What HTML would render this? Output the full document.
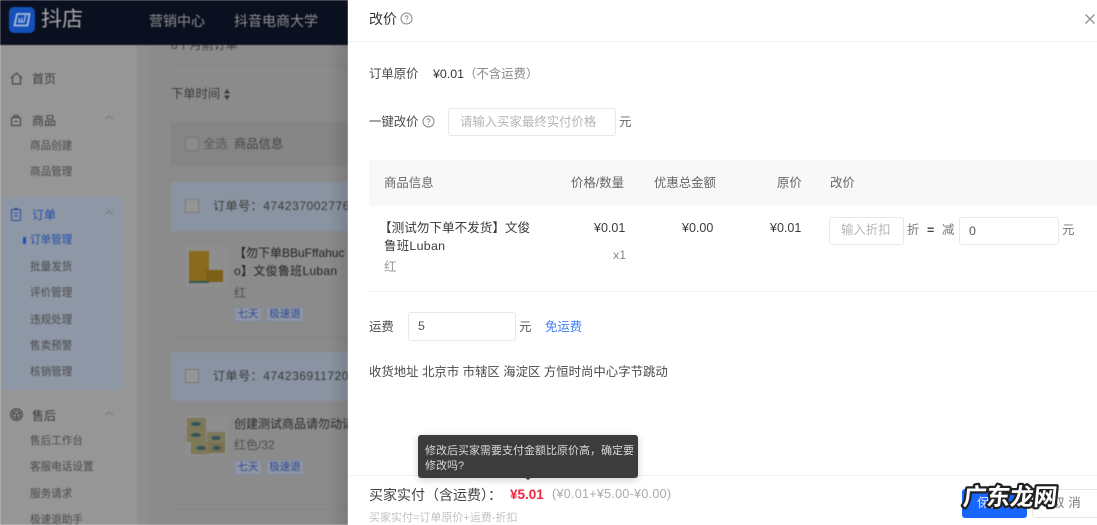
<!DOCTYPE html>
<html lang="zh">
<head>
<meta charset="utf-8">
<style>
html,body{margin:0;padding:0;width:1097px;height:525px;overflow:hidden;background:#fff}
body{font-family:"Liberation Sans","Noto Sans CJK SC",sans-serif;position:relative}
.t{position:absolute;white-space:nowrap;line-height:1}
.b{position:absolute;box-sizing:border-box}
#left{position:absolute;left:0;top:0;width:348px;height:525px;overflow:hidden;background:#8b8b8b;filter:blur(.5px)}
#right{position:absolute;left:348px;top:0;width:749px;height:525px;background:#fff;overflow:hidden;filter:blur(.35px)}
#right .t{color:#4a4a4a;font-size:12.4px}
.nav{font-size:10.6px;color:#4a4a4a}
.gh{font-size:12px;color:#3a3a3a}
.tag{position:absolute;height:15px;box-sizing:border-box;border:1px solid #7f8a9e;background:#8f95a2;color:#2d4a94;font-size:10.500px;line-height:13px;text-align:center}
.inp{position:absolute;box-sizing:border-box;border:1px solid #e8e8e8;border-radius:3px;background:#fff}
</style>
</head>
<body>
<div id="left">
  <div class="b" style="left:0;top:45px;width:137px;height:480px;background:#969696"></div>
  <div class="b" style="left:137px;top:45px;width:12px;height:480px;background:#8f8f8f"></div>
  <div class="b" style="left:2px;top:197px;width:121px;height:193px;background:#8e97a6;border-radius:3px"></div>

  <div class="t" style="left:171px;top:39px;font-size:12px;color:#3f3f3f">6个月前订单</div>
  <div class="b" style="left:0;top:0;width:348px;height:45px;background:#0a101f"></div>

  <div class="b" style="left:9px;top:7px;width:26px;height:26px;background:#1450b8;border-radius:5px"></div>
  <svg style="position:absolute;left:9px;top:7px" width="26" height="26" viewBox="0 0 26 26" fill="none" stroke="#a9bbdc"><path d="M8 7h12.500l-2 11.500H5.500z" stroke-width="1.800"/><path d="M10.500 11l-.7 4h5.500" stroke-width="1.300"/><path d="M13 11l-.6 4M16.500 8l-1.300 7" stroke-width="1.300"/></svg>
  <div class="t" style="left:41px;top:9px;font-size:21px;color:#a8a8a8">抖店</div>
  <div class="t" style="left:149px;top:14px;font-size:14px;color:#8f8f8f">营销中心</div>
  <div class="t" style="left:234px;top:14px;font-size:14px;color:#8f8f8f">抖音电商大学</div>

  <svg style="position:absolute;left:9px;top:71px" width="15" height="15" viewBox="0 0 15 15" fill="none" stroke="#3a3a3a"><path d="M2 7l5.500-5L13 7M3.500 6v7h8V6"/></svg>
  <div class="t gh" style="left:32px;top:73px">首页</div>
  <svg style="position:absolute;left:9px;top:113px" width="15" height="15" viewBox="0 0 15 15" fill="none" stroke="#3a3a3a"><rect x="2.500" y="4.500" width="9" height="8" rx="1"/><path d="M5 4.500V2.500h4v2M5.500 8.500h3"/></svg>
  <div class="t gh" style="left:32px;top:115px">商品</div>
  <svg style="position:absolute;left:104px;top:114px" width="10" height="7" fill="none" stroke="#777"><path d="M1 5l4-3 4 3"/></svg>
  <div class="t nav" style="left:30px;top:141px">商品创建</div>
  <div class="t nav" style="left:30px;top:167px">商品管理</div>

  <svg style="position:absolute;left:9px;top:207px" width="15" height="15" viewBox="0 0 15 15" fill="none" stroke="#2a4f9e"><rect x="2.500" y="2.500" width="9" height="11" rx="1"/><path d="M5 1.500h4M5 6h4M5 9h4"/></svg>
  <div class="t gh" style="left:32px;top:209px;color:#1f4fa8">订单</div>
  <svg style="position:absolute;left:104px;top:209px" width="10" height="7" fill="none" stroke="#777"><path d="M1 5l4-3 4 3"/></svg>
  <div class="b" style="left:23px;top:237px;width:3px;height:7px;background:#1a4fb8;border-radius:1px"></div>
  <div class="t nav" style="left:30px;top:235px;color:#1f4fa8">订单管理</div>
  <div class="t nav" style="left:30px;top:262px">批量发货</div>
  <div class="t nav" style="left:30px;top:288px">评价管理</div>
  <div class="t nav" style="left:30px;top:315px">违规处理</div>
  <div class="t nav" style="left:30px;top:341px">售卖预警</div>
  <div class="t nav" style="left:30px;top:367px">核销管理</div>

  <svg style="position:absolute;left:9px;top:407px" width="15" height="15" viewBox="0 0 15 15" fill="none" stroke="#3a3a3a"><circle cx="7.500" cy="7.500" r="5.800"/><path d="M7.500 3.500l3.500 2v4l-3.500 2-3.500-2v-4zM4 5.500l3.500 2 3.500-2M7.500 7.500v4"/></svg>
  <div class="t gh" style="left:32px;top:410px">售后</div>
  <svg style="position:absolute;left:104px;top:410px" width="10" height="7" fill="none" stroke="#777"><path d="M1 5l4-3 4 3"/></svg>
  <div class="t nav" style="left:30px;top:436px">售后工作台</div>
  <div class="t nav" style="left:30px;top:462px">客服电话设置</div>
  <div class="t nav" style="left:30px;top:489px">服务请求</div>
  <div class="t nav" style="left:30px;top:515px">极速退助手</div>

  <div class="b" style="left:171px;top:64px;width:177px;height:1px;background:#858585"></div>
  <div class="t" style="left:171px;top:88px;font-size:12.300px;color:#3a3a3a">下单时间</div>
  <svg style="position:absolute;left:223px;top:89px" width="8" height="11"><path d="M4 0l3 4.500H1zM4 11l3-4.500H1z" fill="#3a3a3a"/></svg>

  <div class="b" style="left:171px;top:122px;width:177px;height:44px;background:#858585"></div>
  <div class="b" style="left:185px;top:137px;width:14px;height:14px;border:1px solid #777;background:#8d8d8d"></div>
  <div class="t" style="left:203px;top:138px;font-size:12.300px;color:#5a5a5a">全选</div>
  <div class="t" style="left:234px;top:138px;font-size:12.300px;color:#444">商品信息</div>

  <div class="b" style="left:171px;top:182px;width:177px;height:49px;background:#8a93a1"></div>
  <div class="b" style="left:185px;top:199px;width:14px;height:14px;border:1px solid #7a7a7a;background:#969696"></div>
  <div class="t" style="left:213px;top:200px;font-size:12px;letter-spacing:.55px;color:#3a3a3a">订单号：474237002776</div>

  <svg style="position:absolute;left:186px;top:246px" width="41" height="41" viewBox="0 0 41 41"><rect width="41" height="41" fill="#8e8e8e"/><rect x="3" y="5" width="20" height="32" fill="#8a6a1c"/><rect x="20" y="24" width="17" height="12" fill="#7d5f18"/><rect x="3" y="35" width="20" height="2" fill="#2f5a52"/></svg>
  <div class="t" style="left:234px;top:247px;font-size:12px;color:#222">【勿下单BBuFffahuc</div>
  <div class="t" style="left:234px;top:265px;font-size:12px;letter-spacing:.3px;color:#222">o】文俊鲁班Luban</div>
  <div class="t" style="left:234px;top:287px;font-size:12px;color:#4e4e4e">红</div>
  <div class="tag" style="left:234px;top:307px;width:28px">七天</div>
  <div class="tag" style="left:266px;top:307px;width:38px">极速退</div>
  <div class="b" style="left:171px;top:337px;width:177px;height:1px;background:#858585"></div>

  <div class="b" style="left:171px;top:352px;width:177px;height:49px;background:#8a93a1"></div>
  <div class="b" style="left:185px;top:369px;width:14px;height:14px;border:1px solid #7a7a7a;background:#969696"></div>
  <div class="t" style="left:213px;top:370px;font-size:12px;letter-spacing:.55px;color:#3a3a3a">订单号：474236911720</div>

  <svg style="position:absolute;left:186px;top:415px" width="41" height="41" viewBox="0 0 41 41"><rect width="41" height="41" fill="#8e8e8e"/><rect x="1" y="3" width="19" height="12" fill="#7d7858"/><rect x="1" y="15" width="19" height="12" fill="#7d7858"/><rect x="5" y="27" width="19" height="12" fill="#7d7858"/><rect x="21" y="17" width="18" height="11" fill="#7d7858"/><rect x="24" y="28" width="15" height="10" fill="#76714f"/><ellipse cx="10" cy="9" rx="5" ry="2" fill="#33535a"/><ellipse cx="10" cy="20" rx="5" ry="2" fill="#33535a"/><ellipse cx="15" cy="33" rx="5" ry="2" fill="#33535a"/><ellipse cx="30" cy="23" rx="5" ry="2" fill="#33535a"/><ellipse cx="31" cy="33" rx="4" ry="2" fill="#33535a"/></svg>
  <div class="t" style="left:234px;top:418px;font-size:12px;color:#2a2a2a">创建测试商品请勿动请</div>
  <div class="t" style="left:234px;top:439px;font-size:12px;color:#4e4e4e">红色/32</div>
  <div class="tag" style="left:234px;top:460px;width:28px">七天</div>
  <div class="tag" style="left:266px;top:460px;width:38px">极速退</div>
  <div class="b" style="left:171px;top:509px;width:177px;height:1px;background:#858585"></div>

  <div class="b" style="left:328px;top:45px;width:20px;height:480px;background:linear-gradient(90deg,rgba(0,0,0,0),rgba(0,0,0,.12))"></div>
</div>

<div id="right">
  <div class="t" style="left:21px;top:12px;font-size:14px !important"><span style="font-size:14px;color:#333">改价</span></div>
  <svg style="position:absolute;left:52px;top:12px" width="13" height="13" viewBox="0 0 13 13" fill="none" stroke="#8a8a8a"><circle cx="6.500" cy="6.500" r="5.500"/><path d="M5 5.200a1.500 1.500 0 1 1 2.300 1.300c-.6.400-.8.600-.8 1.200M6.500 9v.8"/></svg>
  <svg style="position:absolute;left:736px;top:13px" width="12" height="12" viewBox="0 0 12 12" stroke="#8f8f8f" stroke-width="1.300"><path d="M1.500 1.500l9 9M10.500 1.500l-9 9"/></svg>
  <div class="b" style="left:0;top:41px;width:749px;height:1px;background:#f2f2f2"></div>

  <div class="t" style="left:21px;top:68px">订单原价</div>
  <div class="t" style="left:85px;top:68px"><span style="color:#333">¥0.01</span></div>
  <div class="t" style="left:116px;top:68px"><span style="color:#8a8a8a">（不含运费）</span></div>

  <div class="t" style="left:21px;top:116px">一键改价</div>
  <svg style="position:absolute;left:74px;top:115px" width="13" height="13" viewBox="0 0 13 13" fill="none" stroke="#8a8a8a"><circle cx="6.500" cy="6.500" r="5.500"/><path d="M5 5.200a1.500 1.500 0 1 1 2.300 1.300c-.6.400-.8.600-.8 1.200M6.500 9v.8"/></svg>
  <div class="inp" style="left:100px;top:108px;width:168px;height:28px"></div>
  <div class="t" style="left:112px;top:116px"><span style="color:#b5b5b5">请输入买家最终实付价格</span></div>
  <div class="t" style="left:271px;top:116px"><span style="color:#666">元</span></div>

  <div class="b" style="left:21px;top:160px;width:728px;height:46px;background:#f8f8f8"></div>
  <div class="t" style="left:36px;top:177px"><span style="color:#666">商品信息</span></div>
  <div class="t" style="left:223px;top:177px"><span style="color:#666">价格/数量</span></div>
  <div class="t" style="left:306px;top:177px"><span style="color:#666">优惠总金额</span></div>
  <div class="t" style="left:429px;top:177px"><span style="color:#666">原价</span></div>
  <div class="t" style="left:482px;top:177px"><span style="color:#666">改价</span></div>

  <div class="t" style="left:31px;top:222px"><span style="color:#3a3a3a;font-size:12.600px">【测试勿下单不发货】文俊</span></div>
  <div class="t" style="left:36px;top:240px"><span style="color:#3a3a3a;letter-spacing:.3px">鲁班Luban</span></div>
  <div class="t" style="left:36px;top:261px"><span style="color:#999">红</span></div>
  <div class="t" style="left:246px;top:222px"><span style="color:#3a3a3a;font-size:12.500px">¥0.01</span></div>
  <div class="t" style="left:265px;top:249px"><span style="color:#888">x1</span></div>
  <div class="t" style="left:334px;top:222px"><span style="color:#3a3a3a;font-size:12.500px">¥0.00</span></div>
  <div class="t" style="left:422px;top:222px"><span style="color:#3a3a3a;font-size:12.500px">¥0.01</span></div>

  <div class="inp" style="left:481px;top:217px;width:75px;height:28px"></div>
  <div class="t" style="left:493px;top:224px"><span style="color:#b5b5b5">输入折扣</span></div>
  <div class="t" style="left:559px;top:224px"><span style="color:#777">折</span></div>
  <div class="t" style="left:579px;top:224px;font-weight:bold"><span style="color:#444">=</span></div>
  <div class="t" style="left:594px;top:224px"><span style="color:#777">减</span></div>
  <div class="inp" style="left:611px;top:217px;width:100px;height:28px"></div>
  <div class="t" style="left:621px;top:225px"><span style="color:#555">0</span></div>
  <div class="t" style="left:714px;top:224px"><span style="color:#777">元</span></div>
  <div class="b" style="left:21px;top:291px;width:728px;height:1px;background:#f2f2f2"></div>

  <div class="t" style="left:21px;top:321px">运费</div>
  <div class="inp" style="left:60px;top:312px;width:108px;height:29px"></div>
  <div class="t" style="left:70px;top:320px"><span style="color:#555">5</span></div>
  <div class="t" style="left:171px;top:321px"><span style="color:#555">元</span></div>
  <div class="t" style="left:197px;top:321px"><span style="color:#3f82f5">免运费</span></div>

  <div class="t" style="left:21px;top:366px">收货地址 北京市 市辖区 海淀区 方恒时尚中心字节跳动</div>

  <div class="b" style="left:0;top:475px;width:749px;height:1px;background:#f2f2f2"></div>
  <div class="t" style="left:21px;top:488px"><span style="font-size:14px;color:#444">买家实付（含运费）：</span></div>
  <div class="t" style="left:162px;top:488px"><span style="font-size:13.500px;font-weight:bold;color:#f0243c">¥5.01</span></div>
  <div class="t" style="left:204px;top:488px"><span style="color:#aaa;font-size:12.500px;letter-spacing:.3px">(¥0.01+¥5.00-¥0.00)</span></div>
  <div class="t" style="left:21px;top:511px"><span style="color:#c2c2c2;font-size:11px">买家实付=订单原价+运费-折扣</span></div>

  <div class="b" style="left:70px;top:435px;width:220px;height:43px;background:#3c3c3c;border-radius:3px;box-shadow:0 2px 8px rgba(0,0,0,.2)"></div>
  <div class="b" style="left:175px;top:476px;width:0;height:0;border-left:5px solid transparent;border-right:5px solid transparent;border-top:4px solid #3c3c3c"></div>
  <div class="t" style="left:77px;top:444px"><span style="color:#d8d8d8;font-size:11px">修改后买家需要支付金额比原价高，确定要</span></div>
  <div class="t" style="left:77px;top:459px"><span style="color:#d8d8d8;font-size:11px">修改吗?</span></div>

  <div class="b" style="left:614px;top:489px;width:65px;height:29px;background:#1966ff;border-radius:3px"></div>
  <div class="t" style="left:629px;top:497px"><span style="color:#dce6ff">保存</span></div>
  <div class="b" style="left:684px;top:489px;width:70px;height:29px;border:1px solid #e6e6e6;border-radius:3px;background:#fff"></div>
  <div class="t" style="left:704px;top:497px;letter-spacing:4px"><span style="color:#777">取消</span></div>

  <svg style="position:absolute;left:614px;top:480px;overflow:visible" width="100" height="34"><text x="0" y="25" font-family="'WenQuanYi Zen Hei','Noto Sans CJK SC',sans-serif" font-size="23.500" font-weight="bold" fill="#fff" stroke="#222" stroke-width="4.500" paint-order="stroke" stroke-linejoin="round" transform="skewX(-6) translate(3 0)">广东龙网</text></svg>
</div>
</body>
</html>
